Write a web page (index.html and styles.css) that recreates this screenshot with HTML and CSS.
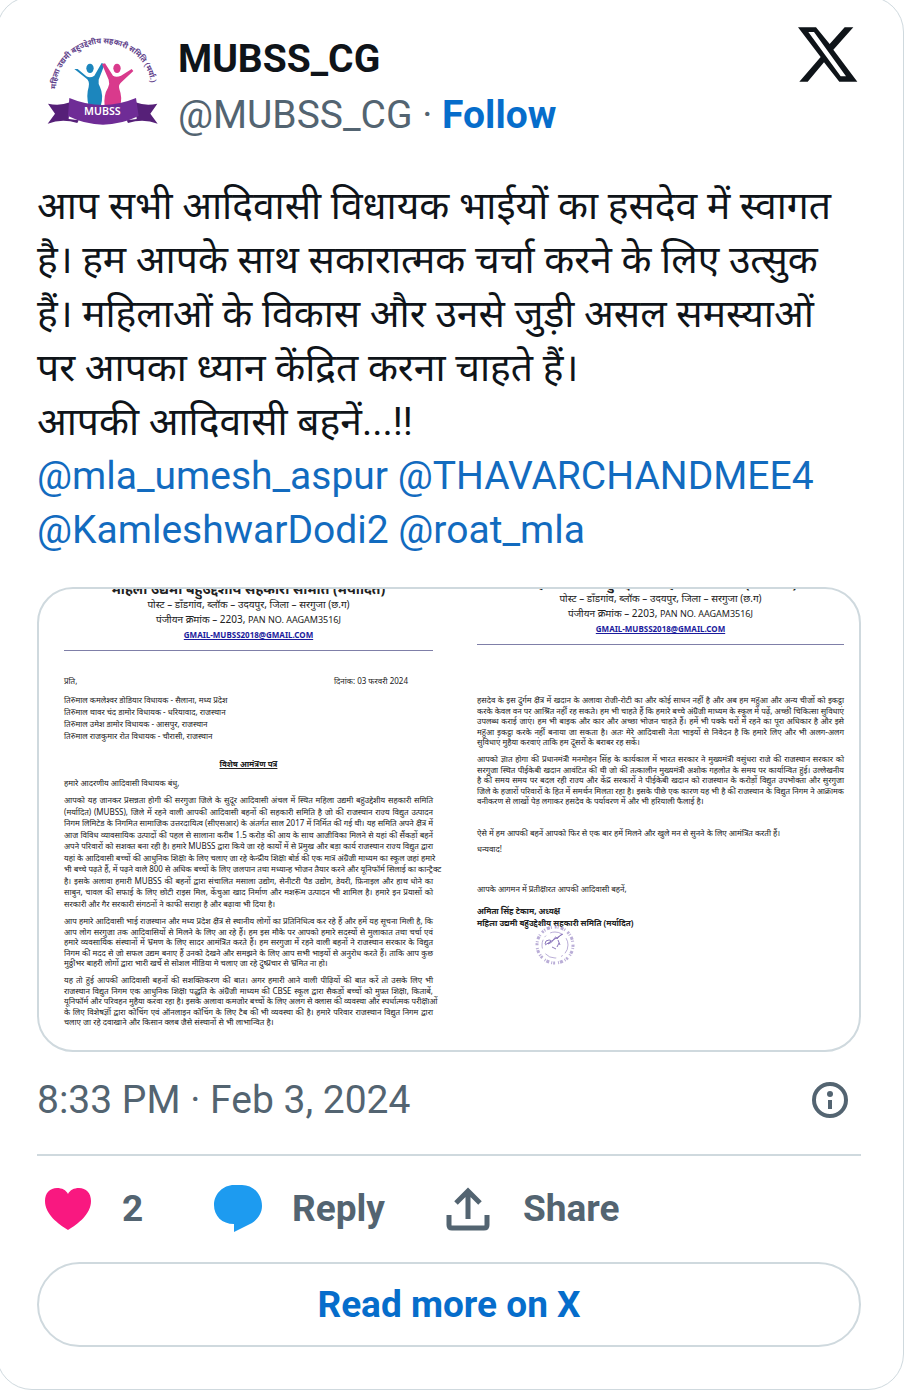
FILE: index.html
```html
<!DOCTYPE html>
<html lang="hi">
<head>
    <meta charset="UTF-8">
    <meta name="viewport" content="width=device-width, initial-scale=1.0">
    <title>MUBSS_CG on X</title>
    <link rel="stylesheet" href="styles.css">
</head>
<body>
    <article class="tweet">
        <header class="tweet-header">
            <svg class="avatar" viewBox="21 6 378 378" role="img" aria-label="MUBSS">
                <path id="arc" d="M78 210 A143 137 0 0 1 364 210" fill="none"/>
                <text class="avatar-ring"><textPath href="#arc">महिला उद्यमी बहुउद्देशीय सहकारी समिति (मर्या.)</textPath></text>
                <ellipse cx="180" cy="148" rx="11" ry="14" fill="#1c86bd"/>
                <path d="M133 150l10 0 26 22q12 6 24-2l22-38 9 4-18 46q-2 12 4 22 12 26 2 58h-36q-8-34 0-58 4-18-8-26z" fill="#1c86bd"/>
                <ellipse cx="261" cy="148" rx="11" ry="14" fill="#d93a8c"/>
                <path d="M216 136l9-3 24 37q10 6 24 0l32-20 5 6-36 34q-10 8-6 20 10 26 2 52h-46q-4-34 10-56 6-12 2-24z" fill="#d93a8c"/>
                <path d="M54 254q35 8 66-4l-4 50 30 4-4 8q-46-14-89 2l22-30z" fill="#562078"/>
                <path d="M382 254q-35 8-66-4l4 50-30 4 4 8q46-14 89 2l-22-30z" fill="#562078"/>
                <path d="M118 237q100 42 200 0l8 54q-108 52-212 0z" fill="#6f2c96"/>
                <text class="avatar-name" x="217" y="289">MUBSS</text>
            </svg>
            <div class="author">
                <div class="name">MUBSS_CG</div>
                <div class="handle">@MUBSS_CG · <a class="follow" href="#">Follow</a></div>
            </div>
            <a class="x-link" href="#" aria-label="View on X">
                <svg class="x-logo" viewBox="45 66 198 198"><path fill-rule="evenodd" d="M54 85h54l41 50 45-50h26l-60 67 72 96h-54l-46-58-49 58H58l64-74zM85 99l97 133h16L102 99z"/></svg>
            </a>
        </header>

        <p class="tweet-text">आप सभी आदिवासी विधायक भाईयों का हसदेव में स्वागत<br>
            है। हम आपके साथ सकारात्मक चर्चा करने के लिए उत्सुक<br>
            हैं। महिलाओं के विकास और उनसे जुड़ी असल समस्याओं<br>
            पर आपका ध्यान केंद्रित करना चाहते हैं।<br>
            आपकी आदिवासी बहनें...!!<br>
            <a href="#">@mla_umesh_aspur</a> <a href="#">@THAVARCHANDMEE4</a><br>
            <a href="#">@KamleshwarDodi2</a> <a href="#">@roat_mla</a></p>

        <div class="media">
            <!-- letter, page 1 -->
            <section class="letter first">
                <div class="letter-head">
                    <div class="org">महिला उद्यमी बहुउद्देशीय सहकारी समिति (मर्यादित)</div>
                    <div>पोस्ट – डाँडगांव, ब्लॉक – उदयपुर, जिला – सरगुजा (छ.ग)</div>
                    <div>पंजीयन क्रमांक – 2203, <small>PAN NO. AAGAM3516J</small></div>
                    <div><a class="email" href="#">GMAIL-MUBSS2018@GMAIL.COM</a></div>
                </div>
                <div class="letter-date"><span>प्रति,</span><span>दिनांक: 03 फरवरी 2024</span></div>
                <p class="address">तिरुमाल कमलेश्वर डोडियार विधायक - सैलाना, मध्य प्रदेश<br>तिरुमाल थावर चंद डामोर विधायक - धरियावाद, राजस्थान<br>तिरुमाल उमेश डामोर विधायक - आसपुर, राजस्थान<br>तिरुमाल राजकुमार रोत विधायक - चौरासी, राजस्थान</p>
                <h2 class="subject">विशेष आमंत्रण पत्र</h2>
                <p class="greeting">हमारे आदरणीय आदिवासी विधायक बंधु,</p>
                <p class="lines long">
                    <span>आपको यह जानकर प्रसन्नता होगी की सरगुजा जिले के सुदूर आदिवासी अंचल में स्थित महिला उद्यमी बहुउद्देशीय सहकारी समिति</span>
                    <span>(मर्यादित) (MUBSS), जिले में रहने वाली आपकी आदिवासी बहनों की सहकारी समिति है जो की राजस्थान राज्य विद्युत उत्पादन</span>
                    <span>निगम लिमिटेड के निगमित सामाजिक उत्तरदायित्व (सीएसआर) के अंतर्गत साल 2017 में निर्मित की गई थी। यह समिति अपने क्षेत्र में</span>
                    <span>आज विविध व्यावसायिक उत्पादों की पहल से सालाना करीब 1.5 करोड़ की आय के साथ आजीविका मिलने से यहां की सैंकड़ों बहनें</span>
                    <span>अपने परिवारों को सशक्त बना रही है। हमारे MUBSS द्वारा किये जा रहे कार्यों में से प्रमुख और बड़ा कार्य राजस्थान राज्य विद्युत द्वारा</span>
                    <span>यहां के आदिवासी बच्चों की आधुनिक शिक्षा के लिए चलाए जा रहे केन्द्रीय शिक्षा बोर्ड की एक मात्र अंग्रेजी माध्यम का स्कूल जहां हमारे</span>
                    <span>भी बच्चे पढ़ते हैं, में पढ़ने वाले 800 से अधिक बच्चों के लिए जलपान तथा मध्यान्ह भोजन तैयार करने और यूनिफॉर्म सिलाई का कान्ट्रैक्ट</span>
                    <span>है। इसके अलावा हमारी MUBSS की बहनों द्वारा संचालित मसाला उद्योग, सेनीटरी पैड उद्योग, डेयरी, फ़िनाइल और हाथ धोने का</span>
                    <span>साबुन, चावल की सफाई के लिए छोटी राइस मिल, केंचुआ खाद निर्माण और मशरूम उत्पादन भी शामिल है। हमारे इन प्रयासों को</span>
                    <span>सरकारी और गैर सरकारी संगठनों ने काफी सराहा है और बढ़ावा भी दिया है।</span>
                </p>
                <p class="lines">
                    <span>आप हमारे आदिवासी भाई राजस्थान और मध्य प्रदेश क्षेत्र से स्थानीय लोगों का प्रतिनिधित्व कर रहे हैं और हमें यह सूचना मिली है, कि</span>
                    <span>आप लोग सरगुजा तक आदिवासियों से मिलने के लिए आ रहे हैं। हम इस मौके पर आपको हमारे सदस्यों से मुलाकात तथा चर्चा एवं</span>
                    <span>हमारे व्यवसायिक संस्थानों में भ्रमण के लिए सादर आमंत्रित करते हैं। हम सरगुजा में रहने वाली बहनों ने राजस्थान सरकार के विद्युत</span>
                    <span>निगम की मदद से जो सफल उद्यम बनाए हैं उनको देखने और समझने के लिए आप सभी भाइयों से अनुरोध करते हैं। ताकि आप कुछ</span>
                    <span>मुठ्ठीभर बाहरी लोगों द्वारा भारी खर्चे से सोशल मीडिया मे चलाए जा रहे दुष्प्रचार से भ्रमित ना हो।</span>
                </p>
                <p class="lines">
                    <span>यह तो हुई आपकी आदिवासी बहनों की सशक्तिकरण की बात। अगर हमारी आने वाली पीढ़ियों की बात करें तो उसके लिए भी</span>
                    <span>राजस्थान विद्युत निगम एक आधुनिक शिक्षा पद्धति के अंग्रेजी माध्यम की CBSE स्कूल द्वारा सैकड़ों बच्चों को मुफ़्त शिक्षा, किताबें,</span>
                    <span>यूनिफॉर्म और परिवहन मुहैया करवा रहा है। इसके अलावा कमजोर बच्चों के लिए अलग से क्लास की व्यवस्था और स्पर्धात्मक परीक्षाओं</span>
                    <span>के लिए विशेषज्ञों द्वारा कोचिंग एवं ऑनलाइन कोचिंग के लिए टैब की भी व्यवस्था की है। हमारे परिवार राजस्थान विद्युत निगम द्वारा</span>
                    <span>चलाए जा रहे दवाखाने और किसान क्लब जैसे संस्थानों से भी लाभान्वित है।</span>
                </p>
            </section>

            <!-- letter, page 2 -->
            <section class="letter second">
                <div class="letter-head">
                    <div class="org">महिला उद्यमी बहुउद्देशीय सहकारी समिति (मर्यादित)</div>
                    <div>पोस्ट – डाँडगांव, ब्लॉक – उदयपुर, जिला – सरगुजा (छ.ग)</div>
                    <div>पंजीयन क्रमांक – 2203, <small>PAN NO. AAGAM3516J</small></div>
                    <div><a class="email" href="#">GMAIL-MUBSS2018@GMAIL.COM</a></div>
                </div>
                <p class="lines">
                    <span>हसदेव के इस दुर्गम क्षेत्र में खदान के अलावा रोजी-रोटी का और कोई साधन नहीं है और अब हम महुआ और अन्य चीजों को इकट्ठा</span>
                    <span>करके केवल वन पर आश्रित नहीं रह सकते। हम भी चाहते हैं कि हमारे बच्चे अंग्रेजी माध्यम के स्कूल में पढ़ें, अच्छी चिकित्सा सुविधाएं</span>
                    <span>उपलब्ध कराई जाएं। हम भी बाइक और कार और अच्छा भोजन चाहते हैं। हमें भी पक्के घरों में रहने का पूरा अधिकार है और इसे</span>
                    <span>महुआ इकट्ठा करके नहीं बनाया जा सकता है। अतः मेरे आदिवासी नेता भाइयों से निवेदन है कि हमारे लिए और भी अलग-अलग</span>
                    <span>सुविधाएं मुहैया करवाएं ताकि हम दूसरों के बराबर रह सकें।</span>
                </p>
                <p class="lines">
                    <span>आपको ज्ञात होगा की प्रधानमंत्री मनमोहन सिंह के कार्यकाल में भारत सरकार ने मुख्यमंत्री वसुंधरा राजे की राजस्थान सरकार को</span>
                    <span>सरगुजा स्थित पीईकेबी खदान आवंटित की थी जो की तत्कालीन मुख्यमंत्री अशोक गहलोत के समय पर कार्यान्वित हुई। उल्लेखनीय</span>
                    <span>है की समय समय पर बदल रही राज्य और केंद्र सरकारों ने पीईकेबी खदान को राजस्थान के करोड़ों विद्युत उपभोक्ता और सुरगुजा</span>
                    <span>जिले के हजारों परिवारों के हित में समर्थन मिलता रहा है। इसके पीछे एक कारण यह भी है की राजस्थान के विद्युत निगम ने आक्रामक</span>
                    <span>वनीकरण से लाखों पेड़ लगाकर हसदेव के पर्यावरण में और भी हरियाली फैलाई है।</span>
                </p>
                <p class="invite">ऐसे में हम आपकी बहनें आपको फिर से एक बार हमें मिलने और खुले मन से सुनने के लिए आमंत्रित करती हैं।</p>
                <p class="thanks">धन्यवाद!</p>
                <p class="closing">आपके आगमन में प्रतीक्षारत आपकी आदिवासी बहनें,</p>
                <div class="signature">
                    <div>अमिता सिंह टेकाम, अध्यक्ष</div>
                    <div>महिला उद्यमी बहुउद्देशीय सहकारी समिति (मर्यादित)</div>
                    <svg class="stamp" viewBox="0 0 42 42" fill="none" stroke="#8c78bd" aria-hidden="true">
                        <circle cx="21" cy="21" r="18" stroke-width="3" stroke-dasharray="2 1 1 2 3 1 1 3" opacity=".6"/>
                        <circle cx="21" cy="21" r="13" stroke-dasharray="9 3 2 5 12 6" opacity=".6"/>
                        <path d="M11 20q0-4 4-4t-1 4q4-1 6-5t3 0q3-4 5-5M11 21l18-11M24 16l2 5M18 23l4 2M25 19l-2 4"/>
                    </svg>
                </div>
            </section>
        </div>

        <div class="tweet-info">
            <time datetime="2024-02-03T20:33">8:33 PM · Feb 3, 2024</time>
            <a href="#" aria-label="Information">
                <svg class="info-icon" viewBox="0 0 36 36"><circle cx="18" cy="18" r="16" fill="none" stroke="#536471" stroke-width="4"/><circle cx="18" cy="12" r="3" fill="#536471"/><path d="M16 18h4v9h-4z" fill="#536471"/></svg>
            </a>
        </div>

        <div class="actions">
            <button class="action like" type="button">
                <svg viewBox="0 0 48 48"><path d="M24 45C14 39 1 29 1 16 1 8 6 3 13 3c5 0 9 2 11 6 2-4 6-6 11-6 7 0 12 5 12 13 0 13-13 23-23 29z" fill="#f91880"/></svg>
                <span>2</span>
            </button>
            <button class="action reply" type="button">
                <svg viewBox="0 0 48 48"><path d="M20 0h8c11 0 20 9 20 21 0 7-4 13-10 17L20 47v-8C8 39 0 31 0 20 0 9 9 0 20 0z" fill="#1d9bf0"/></svg>
                <span>Reply</span>
            </button>
            <button class="action share" type="button">
                <svg viewBox="0 0 48 48" fill="none" stroke="#536471" stroke-width="5"><path d="M23 34V6M11 18L23 6l12 12M4 30v10q0 3 3 3h32q3 0 3-3V30"/></svg>
                <span>Share</span>
            </button>
        </div>

        <a class="read-more" href="#">Read more on X</a>
    </article>
</body>
</html>
```
FILE: styles.css
```css
/* General styles */
* {
    box-sizing: border-box;
}

body {
    margin: 0;
    background-color: #fff;
    color: #0f1419;
    font-family: Roboto, "Noto Sans", sans-serif;
    overflow-x: hidden;
}

a {
    color: #066dcb;
    text-decoration: none;
}

p {
    margin: 0;
}

.tweet {
    margin: -4px 0 0 -4px;
    padding: 24px 42px 42px 40px;
    border: 1px solid #cfd9de;
    border-radius: 36px;
}

/* Header */
.tweet-header {
    display: flex;
    align-items: flex-start;
}

.avatar {
    width: 126px;
    height: 126px;
    flex: none;
}

.avatar-ring {
    font-size: 23px;
    font-weight: bold;
    fill: #60418a;
}

.avatar-name {
    font-family: "Noto Sans", sans-serif;
    font-size: 32px;
    font-weight: 600;
    text-anchor: middle;
    fill: #fff;
}

.author {
    flex: 1;
    padding: 10px 0 0 15px;
    font-size: 39px;
    line-height: 56px;
}

.name {
    font-weight: bold;
}

.handle {
    color: #536471;
}

.follow {
    font-weight: bold;
}

.x-logo {
    display: block;
    width: 66px;
    height: 66px;
    fill: #0f1419;
}

/* Text */
.tweet-text {
    margin-top: 32px;
    color: #0f1419;
    font-size: 39px;
    line-height: 54px;
    white-space: nowrap;
}

.tweet-text a {
    color: #126bbf;
}

/* Attached letter */
.media {
    display: grid;
    grid-template-columns: 1fr 1fr;
    height: 465px;
    margin-top: 30px;
    border: 2px solid #cfd9de;
    border-radius: 36px;
    overflow: hidden;
}

.letter {
    min-width: 0;
    color: #222;
    font-family: "Noto Sans", sans-serif;
    font-size: 8px;
    line-height: 12px;
    white-space: nowrap;
}

.first {
    padding: 0 16px 0 25px;
    margin-top: -8px;
}

.second {
    padding: 0 15px 0 28px;
    margin-top: -14px;
}

.letter-head {
    padding-bottom: 8px;
    border-bottom: 1px solid #7f7fa8;
    font-size: 10px;
    line-height: 15px;
    text-align: center;
}

.org {
    font-size: 14px;
    font-weight: bold;
    line-height: 16px;
}

.letter-head small {
    font-size: 9px;
}

.email {
    color: #1a1a9c;
    font-size: 8px;
    font-weight: bold;
    text-decoration: underline;
}

.letter-date {
    display: flex;
    justify-content: space-between;
    margin-top: 24px;
    padding-right: 25px;
}

.address {
    margin-top: 7px;
}

.subject {
    margin: 16px 0 7px;
    font-size: 8px;
    text-align: center;
    text-decoration: underline;
}

.lines {
    display: grid;
    grid-template-columns: minmax(0, 1fr);
    grid-auto-rows: 1fr;
    height: 53px;
    margin-top: 6px;
    line-height: 10px;
}

.lines.long {
    height: 115px;
}

.lines span {
    text-align: justify;
    text-align-last: justify;
}

.lines span:last-child {
    text-align-last: left;
}

.letter-head + .lines {
    margin-top: 50px;
}

.invite {
    margin-top: 20px;
}

.thanks {
    margin-top: 4px;
}

.closing {
    margin-top: 28px;
}

.signature {
    position: relative;
    margin-top: 10px;
    font-weight: bold;
}

.stamp {
    position: absolute;
    left: 57px;
    top: 19px;
    width: 42px;
    height: 42px;
}

/* Date row */
.tweet-info {
    display: flex;
    justify-content: space-between;
    align-items: center;
    padding: 21px 13px 27px 0;
    border-bottom: 2px solid #cfd9de;
    color: #536471;
    font-size: 39px;
    line-height: 54px;
}

.info-icon {
    display: block;
    width: 36px;
    height: 36px;
}

/* Buttons */
.actions {
    display: flex;
    gap: 60px;
    padding: 26px 0 26px 7px;
}

.action {
    display: flex;
    align-items: center;
    gap: 30px;
    padding: 0;
    border: none;
    background: none;
    color: #536471;
    font-family: inherit;
    font-size: 37px;
    font-weight: bold;
    line-height: 54px;
    text-align: left;
    cursor: pointer;
}

.action svg {
    width: 48px;
    height: 48px;
}

.action span {
    min-width: 32px;
}

.read-more {
    display: block;
    border: 2px solid #cfd9de;
    border-radius: 43px;
    font-size: 37px;
    font-weight: bold;
    line-height: 81px;
    text-align: center;
}
```
